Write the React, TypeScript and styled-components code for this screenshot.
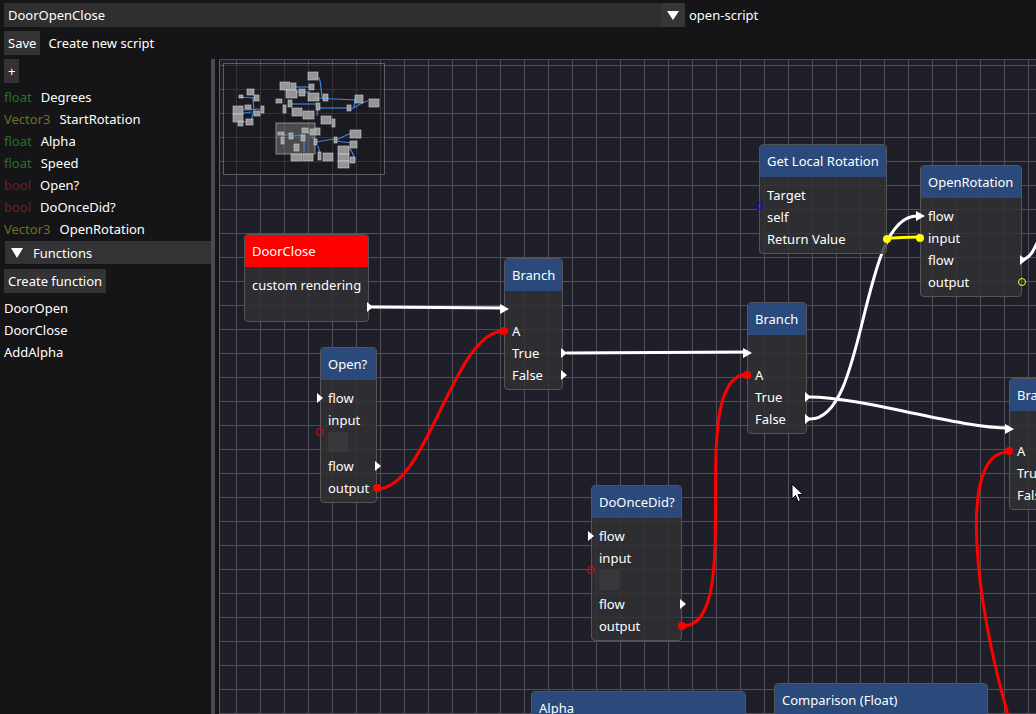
import React from "react";
import styled, { createGlobalStyle } from "styled-components";

const OX = 220;
const OY = 60;

const GlobalStyle = createGlobalStyle`
  html, body { margin: 0; padding: 0; background: #151517; }
  body {
    font-family: "Noto Sans", "Open Sans", "DejaVu Sans", sans-serif;
    font-size: 13px;
    color: #ffffff;
  }
  *, *::before, *::after { box-sizing: border-box; }
`;

const Root = styled.div`
  width: 1036px;
  height: 714px;
  overflow: hidden;
  display: flex;
  flex-direction: column;
  gap: 4px;
  padding: 3px 0 0 4px;
`;

const Bar = styled.div<{ $gap: number }>`
  flex: none;
  height: 24px;
  display: flex;
  align-items: center;
  gap: ${(p) => p.$gap}px;
`;

const Combo = styled.div`
  width: 681px;
  height: 24px;
  background: #2f2f31;
  display: flex;
  align-items: center;
  justify-content: space-between;
  padding-left: 4px;
  line-height: 24px;
`;

const ComboButton = styled.div`
  width: 24px;
  height: 24px;
  background: #363638;
  display: flex;
  align-items: center;
  justify-content: center;
`;

const DownTriangle = styled.span<{ $w: number; $h: number }>`
  width: 0;
  height: 0;
  border-left: ${(p) => p.$w / 2}px solid transparent;
  border-right: ${(p) => p.$w / 2}px solid transparent;
  border-top: ${(p) => p.$h}px solid #ffffff;
`;

const Label = styled.span`
  line-height: 24px;
  white-space: nowrap;
`;

const Button = styled.button<{ $mt?: number }>`
  flex: none;
  height: 24px;
  margin-top: ${(p) => p.$mt ?? 0}px;
  padding: 0 4px;
  border: none;
  background: #333335;
  color: #ffffff;
  font: inherit;
  line-height: 24px;
  cursor: default;
`;

const Main = styled.div`
  flex: 1;
  min-height: 0;
  display: flex;
`;

const Sidebar = styled.div`
  width: 207px;
  flex: none;
  display: flex;
  flex-direction: column;
  align-items: flex-start;
`;

const List = styled.div<{ $mt: number }>`
  margin-top: ${(p) => p.$mt}px;
  display: flex;
  flex-direction: column;
`;

const VarRow = styled.div`
  height: 22px;
  line-height: 22px;
  display: flex;
  gap: 9px;
  white-space: nowrap;
`;

const TypeName = styled.span<{ $color: string }>`
  color: ${(p) => p.$color};
`;

const SectionHeader = styled.div`
  margin: 1px 0 0 1px;
  width: 206px;
  height: 23px;
  background: #333335;
  display: flex;
  align-items: center;
  gap: 10px;
  padding-left: 6px;
`;

const FuncRow = styled.div`
  height: 22px;
  line-height: 22px;
`;

const Splitter = styled.div`
  width: 4px;
  flex: none;
  background: #4a4a55;
  margin-right: 4px;
`;

const Canvas = styled.div`
  flex: 1;
  position: relative;
  overflow: hidden;
  border-top: 1px solid #4c4c56;
  border-left: 1px solid #5a5a64;
  background-color: #1f1f29;
  background-image: linear-gradient(to right, #50505a 1px, transparent 1px),
    linear-gradient(to bottom, #50505a 1px, transparent 1px);
  background-size: 24px 24px;
  background-position: 16px 5px;
`;

const LinkLayer = styled.svg`
  position: absolute;
  left: 0;
  top: 0;
  width: 100%;
  height: 100%;
  overflow: visible;
  pointer-events: none;
`;

const NodeBox = styled.div<{ $x: number; $y: number; $w: number }>`
  position: absolute;
  left: ${(p) => p.$x - OX}px;
  top: ${(p) => p.$y - OY}px;
  width: ${(p) => p.$w}px;
  border: 1px solid #555558;
  border-radius: 4px;
  background: rgba(50, 50, 52, 0.82);
  padding-bottom: 3px;
`;

const NodeTitle = styled.div<{ $bg: string }>`
  height: 32px;
  line-height: 32px;
  padding-left: 7px;
  background: ${(p) => p.$bg};
  border-radius: 3px 3px 0 0;
  white-space: nowrap;
  overflow: hidden;
`;

const NodeBody = styled.div`
  padding-top: 7px;
`;

const PinRow = styled.div`
  position: relative;
  height: 22px;
  line-height: 22px;
  padding-left: 7px;
  white-space: nowrap;
`;

const PinGroup = styled.div`
  position: relative;
`;

const ValueSlot = styled.div`
  height: 24px;
  padding: 1px 0 0 7px;
`;

const ValueBox = styled.div`
  width: 20px;
  height: 20px;
  background: rgba(66, 66, 68, 0.55);
`;

const ExecOutPin = styled.span`
  position: absolute;
  right: -5px;
  top: 50%;
  margin-top: -5px;
  width: 0;
  height: 0;
  border-top: 5px solid transparent;
  border-bottom: 5px solid transparent;
  border-left: 6px solid #ffffff;
`;

const ExecInPin = styled.span<{ $linked: boolean }>`
  position: absolute;
  left: ${(p) => (p.$linked ? -5 : -4)}px;
  top: 50%;
  margin-top: -5px;
  width: 0;
  height: 0;
  border-top: 5px solid transparent;
  border-bottom: 5px solid transparent;
  border-left: ${(p) => (p.$linked ? 9 : 6)}px solid #ffffff;
`;

const DataPin = styled.span<{ $color: string; $hollow: boolean; $side: "l" | "r" }>`
  position: absolute;
  top: 50%;
  ${(p) => (p.$side === "l" ? "left" : "right")}: -5px;
  width: 8px;
  height: 8px;
  margin-top: -4px;
  border-radius: 50%;
  background: ${(p) => (p.$hollow ? "transparent" : p.$color)};
  border: ${(p) => (p.$hollow ? `1.5px solid ${p.$color}` : "none")};
`;

const Minimap = styled.div`
  position: absolute;
  left: 3px;
  top: 3px;
  width: 162px;
  height: 112px;
  border: 1px solid rgba(150, 150, 150, 0.55);
  background: rgba(22, 22, 24, 0.5);
`;

const MinimapArt = styled.svg`
  display: block;
  width: 100%;
  height: 100%;
`;

const Cursor = styled.svg`
  position: absolute;
  left: ${791 - OX}px;
  top: ${483 - OY}px;
  width: 13px;
  height: 20px;
`;

type PinKind = "exec" | "arrow" | "dot" | "ring";
interface PinSpec {
  kind: PinKind;
  color?: string;
}
interface RowSpec {
  label?: string;
  left?: PinSpec;
  right?: PinSpec;
  box?: boolean;
  group?: RowSpec[];
}
interface NodeSpec {
  title: string;
  x: number;
  y: number;
  w: number;
  header?: string;
  rows: RowSpec[];
}

const RED = "#ff0000";
const YELLOW = "#ffff00";
const BLUE = "#0000ff";

const renderPin = (pin: PinSpec | undefined, side: "l" | "r") => {
  if (!pin) return null;
  if (pin.kind === "exec") return side === "l" ? <ExecInPin $linked={false} /> : <ExecOutPin />;
  if (pin.kind === "arrow") return <ExecInPin $linked />;
  return <DataPin $side={side} $color={pin.color ?? "#fff"} $hollow={pin.kind === "ring"} />;
};

const Row: React.FC<{ row: RowSpec }> = ({ row }) => {
  if (row.group) {
    return (
      <PinGroup>
        {row.group.map((r, i) => (
          <Row key={i} row={r} />
        ))}
        {renderPin(row.left, "l")}
        {renderPin(row.right, "r")}
      </PinGroup>
    );
  }
  if (row.box) {
    return (
      <ValueSlot>
        <ValueBox />
      </ValueSlot>
    );
  }
  return (
    <PinRow>
      {row.label}
      {renderPin(row.left, "l")}
      {renderPin(row.right, "r")}
    </PinRow>
  );
};

const GraphNode: React.FC<{ node: NodeSpec }> = ({ node }) => (
  <NodeBox $x={node.x} $y={node.y} $w={node.w}>
    <NodeTitle $bg={node.header ?? "#294a7a"}>{node.title}</NodeTitle>
    <NodeBody>
      {node.rows.map((r, i) => (
        <Row key={i} row={r} />
      ))}
    </NodeBody>
  </NodeBox>
);

const branchRows: RowSpec[] = [
  { left: { kind: "arrow" } },
  { label: "A", left: { kind: "dot", color: RED } },
  { label: "True", right: { kind: "exec" } },
  { label: "False", right: { kind: "exec" } },
];

const boolGetRows: RowSpec[] = [
  { label: "flow", left: { kind: "exec" } },
  { group: [{ label: "input" }, { box: true }], left: { kind: "ring", color: RED } },
  { label: "flow", right: { kind: "exec" } },
  { label: "output", right: { kind: "dot", color: RED } },
];

const nodes: NodeSpec[] = [
  {
    title: "DoorClose",
    x: 244,
    y: 234,
    w: 125,
    header: "#ff0000",
    rows: [{ label: "custom rendering" }, { right: { kind: "exec" } }],
  },
  { title: "Branch", x: 504, y: 258, w: 59, rows: branchRows },
  { title: "Open?", x: 320, y: 347, w: 57, rows: boolGetRows },
  { title: "DoOnceDid?", x: 591, y: 485, w: 91, rows: boolGetRows },
  {
    title: "Get Local Rotation",
    x: 759,
    y: 144,
    w: 128,
    rows: [
      { group: [{ label: "Target" }, { label: "self" }], left: { kind: "ring", color: BLUE } },
      { label: "Return Value", right: { kind: "dot", color: YELLOW } },
    ],
  },
  {
    title: "OpenRotation",
    x: 920,
    y: 165,
    w: 102,
    rows: [
      { label: "flow", left: { kind: "arrow" } },
      { label: "input", left: { kind: "dot", color: YELLOW } },
      { label: "flow", right: { kind: "exec" } },
      { label: "output", right: { kind: "ring", color: YELLOW } },
    ],
  },
  { title: "Branch", x: 747, y: 302, w: 60, rows: branchRows },
  { title: "Branch", x: 1009, y: 378, w: 60, rows: branchRows },
  {
    title: "Alpha",
    x: 531,
    y: 691,
    w: 215,
    rows: [{ label: "output", right: { kind: "dot", color: "#1e7a1e" } }],
  },
  {
    title: "Comparison (Float)",
    x: 774,
    y: 683,
    w: 214,
    rows: [{ label: "A", left: { kind: "dot", color: "#1e7a1e" } }],
  },
];

const bezier = (x1: number, y1: number, x2: number, y2: number) => {
  const d = Math.hypot(x2 - x1, y2 - y1) * 0.25;
  return `M${x1} ${y1} C${x1 + d} ${y1} ${x2 - d} ${y2} ${x2} ${y2}`;
};

const links: { d: string; color: string }[] = [
  { d: bezier(372, 307, 505, 308), color: "#ffffff" },
  { d: bezier(567, 353, 749, 352), color: "#ffffff" },
  { d: bezier(810, 397, 1009, 428), color: "#ffffff" },
  { d: bezier(810, 419, 917, 216), color: "#ffffff" },
  { d: bezier(887, 238, 919, 237), color: YELLOW },
  { d: bezier(377, 489, 504, 331), color: RED },
  { d: bezier(683, 626, 748, 374), color: RED },
  { d: "M1008 452 C958 452 974 600 1010 722", color: RED },
  { d: "M1022 260 C1032 258 1036 245 1044 228", color: "#ffffff" },
];

const miniNodes: [number, number, number, number][] = [
  [84, 8, 10, 8], [56, 18, 10, 8], [67, 19, 5, 7], [62, 26, 11, 8], [75, 25, 6, 7], [85, 20, 5, 6],
  [84, 29, 11, 8], [99, 30, 5, 7], [52, 35, 6, 4], [64, 36, 4, 7], [59, 41, 3, 8], [68, 44, 10, 8],
  [79, 47, 11, 8], [92, 39, 4, 7], [97, 52, 10, 8], [108, 55, 3, 8], [123, 41, 4, 6], [131, 31, 8, 8],
  [145, 35, 10, 8], [23, 25, 7, 6], [15, 31, 4, 3], [30, 31, 5, 6], [9, 42, 10, 8], [21, 41, 6, 4],
  [30, 47, 6, 5], [37, 42, 3, 7], [9, 50, 10, 8], [14, 57, 5, 5], [22, 55, 7, 6], [54, 68, 6, 3],
  [57, 73, 3, 7], [65, 69, 4, 6], [70, 80, 5, 7], [78, 64, 6, 5], [77, 71, 4, 6], [86, 65, 4, 6],
  [91, 64, 5, 7], [90, 75, 3, 6], [67, 90, 11, 7], [79, 90, 10, 7], [94, 88, 3, 8], [99, 89, 10, 8],
  [110, 73, 3, 6], [126, 66, 11, 8], [126, 77, 7, 7], [114, 82, 11, 8], [114, 90, 11, 7],
  [114, 97, 11, 7], [126, 93, 5, 6],
];

const miniLinks: string[] = [
  "M15 33 L32 34",
  "M29 34 L30 47 L27 57",
  "M19 46 L37 45",
  "M19 49 L28 48",
  "M19 58 L24 57",
  "M72 23 L87 23",
  "M89 14 L95 14 C97 16 97 28 98 34",
  "M72 28 L86 28",
  "M90 34 L132 36",
  "M66 40 L94 40",
  "M94 42 L93 52",
  "M95 44 L124 44",
  "M127 45 C134 42 138 38 144 37",
  "M130 44 L131 34",
  "M58 72 L66 70",
  "M68 72 L78 71 L80 74",
  "M80 66 L88 70",
  "M88 73 L92 76",
  "M92 78 L110 75",
  "M112 76 L127 69",
  "M112 77 L127 79",
  "M125 84 C129 88 130 92 131 96",
  "M80 76 L80 88",
  "M94 82 L96 89",
];

const vars: [string, string, string][] = [
  ["float", "#2a6f2a", "Degrees"],
  ["Vector3", "#6f6f25", "StartRotation"],
  ["float", "#2a6f2a", "Alpha"],
  ["float", "#2a6f2a", "Speed"],
  ["bool", "#6e2020", "Open?"],
  ["bool", "#6e2020", "DoOnceDid?"],
  ["Vector3", "#6f6f25", "OpenRotation"],
];

export default function App() {
  return (
    <>
      <GlobalStyle />
      <Root>
        <Bar $gap={4}>
          <Combo>
            <span>DoorOpenClose</span>
            <ComboButton>
              <DownTriangle $w={13} $h={9} />
            </ComboButton>
          </Combo>
          <Label>open-script</Label>
        </Bar>
        <Bar $gap={8}>
          <Button>Save</Button>
          <Label>Create new script</Label>
        </Bar>
        <Main>
          <Sidebar>
            <Button>+</Button>
            <List $mt={3}>
              {vars.map(([t, c, n], i) => (
                <VarRow key={i}>
                  <TypeName $color={c}>{t}</TypeName>
                  <span>{n}</span>
                </VarRow>
              ))}
            </List>
            <SectionHeader>
              <DownTriangle $w={12} $h={10} />
              <span>Functions</span>
            </SectionHeader>
            <Button $mt={5}>Create function</Button>
            <List $mt={4}>
              <FuncRow>DoorOpen</FuncRow>
              <FuncRow>DoorClose</FuncRow>
              <FuncRow>AddAlpha</FuncRow>
            </List>
          </Sidebar>
          <Splitter />
          <Canvas>
            <LinkLayer>
              <g transform={`translate(${-OX},${-OY})`}>
                {links.map((l, i) => (
                  <path key={i} d={l.d} stroke={l.color} strokeWidth={3} fill="none" strokeLinecap="round" />
                ))}
              </g>
            </LinkLayer>
            {nodes.map((n, i) => (
              <GraphNode key={i} node={n} />
            ))}
            <Minimap>
              <MinimapArt viewBox="0 0 160 110">
                <rect x={52} y={59} width={39} height={31} fill="rgba(200,200,200,0.28)" stroke="rgba(200,200,200,0.6)" strokeWidth={1} />
                {miniLinks.map((d, i) => (
                  <path key={i} d={d} stroke="#3d85e0" strokeWidth={1.2} fill="none" />
                ))}
                {miniNodes.map(([x, y, w, h], i) => (
                  <rect key={i} x={x} y={y} width={w} height={h} fill="rgba(170,170,170,0.85)" stroke="rgba(215,215,215,0.7)" strokeWidth={0.8} />
                ))}
              </MinimapArt>
            </Minimap>
            <Cursor viewBox="0 0 13 20">
              <path d="M1 1 L1 16 L4.5 12.5 L7 18.5 L9.5 17.5 L7 11.5 L12 11.5 Z" fill="#ffffff" stroke="#000000" strokeWidth={1} strokeLinejoin="round" />
            </Cursor>
          </Canvas>
        </Main>
      </Root>
    </>
  );
}
